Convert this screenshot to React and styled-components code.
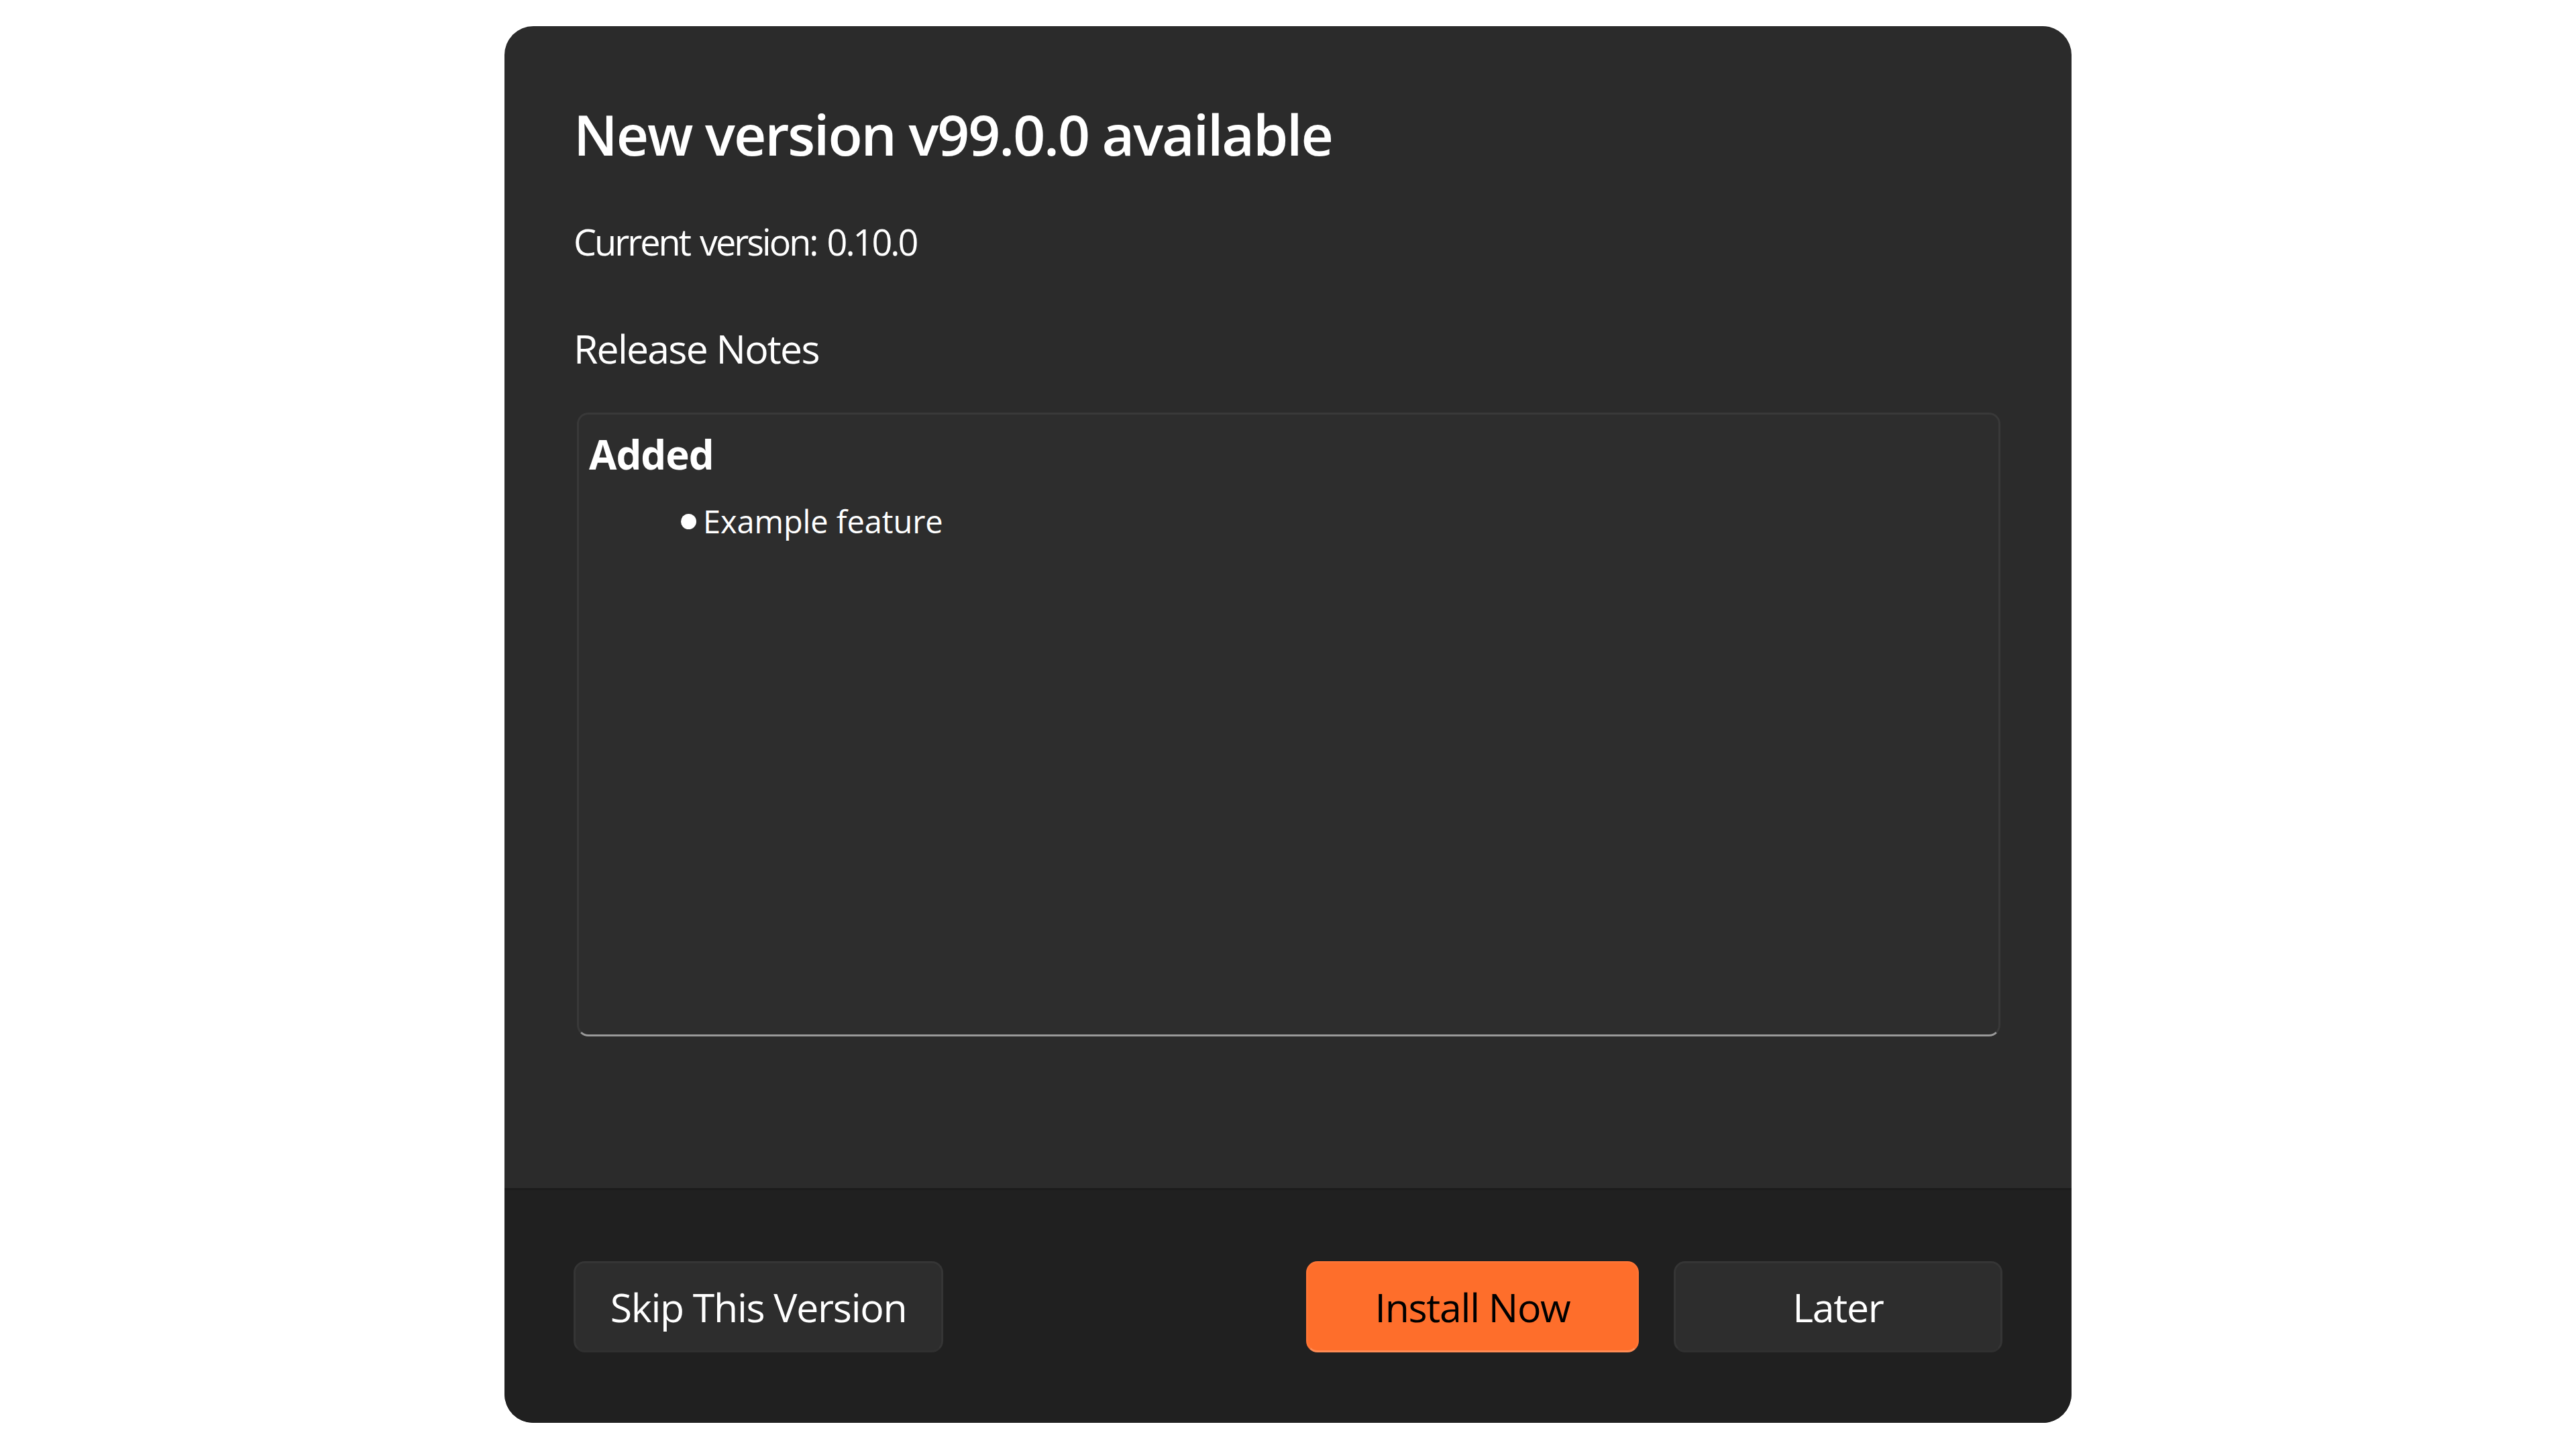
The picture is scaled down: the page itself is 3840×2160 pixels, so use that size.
import React from "react";
import styled, { createGlobalStyle } from "styled-components";

const FONT = `"Open Sans", "Noto Sans", "Liberation Sans", sans-serif`;

const GlobalStyle = createGlobalStyle`
  html, body {
    margin: 0;
    padding: 0;
    background: #ffffff;
  }
  body {
    font-family: ${FONT};
  }
`;

const Page = styled.div`
  display: flex;
  align-items: center;
  justify-content: center;
  min-height: 100vh;
`;

const Dialog = styled.div`
  width: 2336px;
  height: 2082px;
  border-radius: 43px;
  background-color: #2b2b2b;
  overflow: hidden;
  display: flex;
  flex-direction: column;
  color: #ffffff;
`;

const Content = styled.div`
  flex: 1;
  display: flex;
  flex-direction: column;
  padding: 105px 103px 0 103px;
`;

const Title = styled.h1`
  margin: 0;
  font-size: 84px;
  line-height: 112px;
  font-weight: 600;
  letter-spacing: -2.1px;
`;

const VersionLine = styled.p`
  margin: 64px 0 0 0;
  font-size: 54px;
  line-height: 80px;
  font-weight: 400;
  letter-spacing: -3px;
  word-spacing: 4px;
`;

const SectionLabel = styled.h2`
  margin: 79px 0 0 0;
  font-size: 59px;
  line-height: 80px;
  font-weight: 400;
  letter-spacing: -1.8px;
`;

const NotesBox = styled.div`
  margin: 56px 3px 0 5px;
  height: 930px;
  box-sizing: border-box;
  background-color: #2d2d2d;
  border: 3px solid #393939;
  border-bottom-color: #9a9a9a;
  border-radius: 17px;
  padding: 19px 15px;
`;

const NotesHeading = styled.h3`
  margin: 0;
  font-size: 60px;
  line-height: 80px;
  font-weight: 700;
  letter-spacing: -1px;
`;

const NotesList = styled.ul`
  list-style: none;
  margin: 28px 0 0 0;
  padding: 0 0 0 137px;
`;

const NotesItem = styled.li`
  display: flex;
  align-items: center;
  gap: 10px;
  font-size: 47px;
  line-height: 64px;
  letter-spacing: -0.1px;

  &::before {
    content: "";
    width: 23px;
    height: 23px;
    border-radius: 50%;
    background-color: #ffffff;
    flex-shrink: 0;
  }
`;

const Footer = styled.div`
  height: 350px;
  box-sizing: border-box;
  background-color: #202020;
  border-top: 3px solid #1c1c1c;
  display: flex;
  align-items: center;
  gap: 52px;
  padding: 0 103px;
`;

const Button = styled.button`
  width: ${(p) => p.$width}px;
  height: 136px;
  box-sizing: border-box;
  margin-left: ${(p) => (p.$pushRight ? "auto" : "0")};
  border-radius: 17px;
  font-family: ${FONT};
  font-size: 59px;
  font-weight: 400;
  letter-spacing: -1.3px;
  cursor: pointer;
  background-color: ${(p) => (p.$accent ? "#fe6e2b" : "#2d2d2d")};
  color: ${(p) => (p.$accent ? "#000000" : "#ffffff")};
  border: 3px solid ${(p) => (p.$accent ? "#fe7434" : "#353535")};
  border-bottom-color: ${(p) => (p.$accent ? "#ff8c55" : "#303030")};
`;

const App = () => {
  return (
    <>
      <GlobalStyle />
      <Page>
        <Dialog>
          <Content>
            <Title>New version v99.0.0 available</Title>
            <VersionLine>Current version: 0.10.0</VersionLine>
            <SectionLabel>Release Notes</SectionLabel>
            <NotesBox>
              <NotesHeading>Added</NotesHeading>
              <NotesList>
                <NotesItem>Example feature</NotesItem>
              </NotesList>
            </NotesBox>
          </Content>
          <Footer>
            <Button $width={551}>Skip This Version</Button>
            <Button $width={496} $accent $pushRight>
              Install Now
            </Button>
            <Button $width={490}>Later</Button>
          </Footer>
        </Dialog>
      </Page>
    </>
  );
};

export default App;
